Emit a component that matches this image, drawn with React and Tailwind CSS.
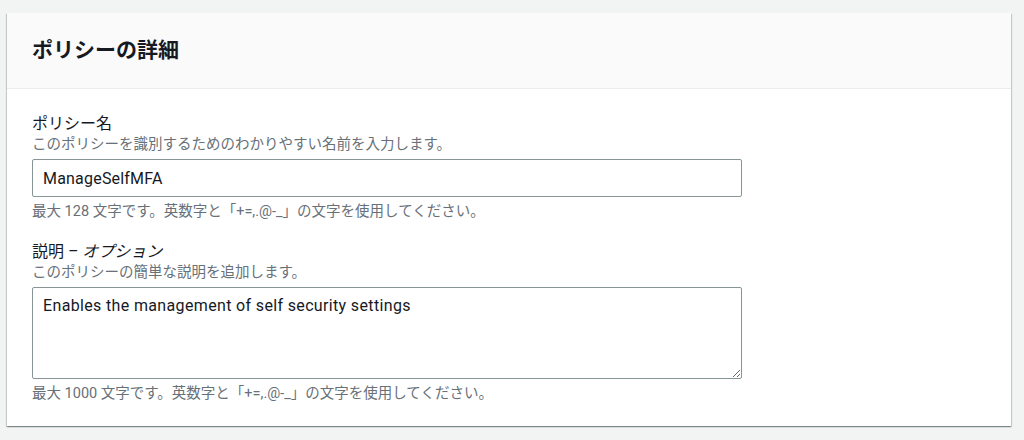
import React from 'react';

const font = { fontFamily: 'Roboto, "Noto Sans CJK JP", sans-serif' };

const Field = ({ label, optional, desc, hint, children }) => (
  <div>
    <div className="text-[16px] leading-[22px] text-[#16191f]">
      {label}
      {optional && <i> – オプション</i>}
    </div>
    <div className="text-[14.5px] leading-[20px] text-[#687078]">{desc}</div>
    <div className="mt-[4px]">{children}</div>
    <div className="mt-[5px] text-[14.5px] leading-[20px] text-[#687078]">{hint}</div>
  </div>
);

const App = () => {
  return (
    <div className="min-h-[440px] bg-[#f2f3f3] pt-[13px] pl-[7px] pr-[13px]" style={font}>
      <div className="bg-white shadow-[0_1px_1px_0_rgba(0,28,36,0.3),1px_1px_1px_0_rgba(0,28,36,0.15),-1px_1px_1px_0_rgba(0,28,36,0.15)]">
        <div className="bg-[#fafafa] border-b border-[#eaeded] h-[76px] flex items-center px-[25px]">
          <h2 className="text-[21px] font-bold text-[#16191f]">ポリシーの詳細</h2>
        </div>
        <div className="px-[25px] pt-[24px] pb-[22px] flex flex-col gap-[19px]">
          <Field
            label="ポリシー名"
            desc="このポリシーを識別するためのわかりやすい名前を入力します。"
            hint="最大 128 文字です。英数字と「+=,.@-_」の文字を使用してください。"
          >
            <input
              className="w-[710px] h-[38px] border border-[#879596] rounded-[2px] px-[10px] text-[16px] tracking-[0.2px] text-[#16191f] outline-none"
              style={font}
              defaultValue="ManageSelfMFA"
            />
          </Field>
          <Field
            label="説明"
            optional
            desc="このポリシーの簡単な説明を追加します。"
            hint="最大 1000 文字です。英数字と「+=,.@-_」の文字を使用してください。"
          >
            <textarea
              className="block w-[710px] h-[92px] border border-[#879596] rounded-[2px] px-[10px] py-[7px] text-[16px] tracking-[0.35px] leading-[22px] text-[#16191f] outline-none"
              style={font}
              defaultValue="Enables the management of self security settings"
            />
          </Field>
        </div>
      </div>
    </div>
  );
};

export default App;
